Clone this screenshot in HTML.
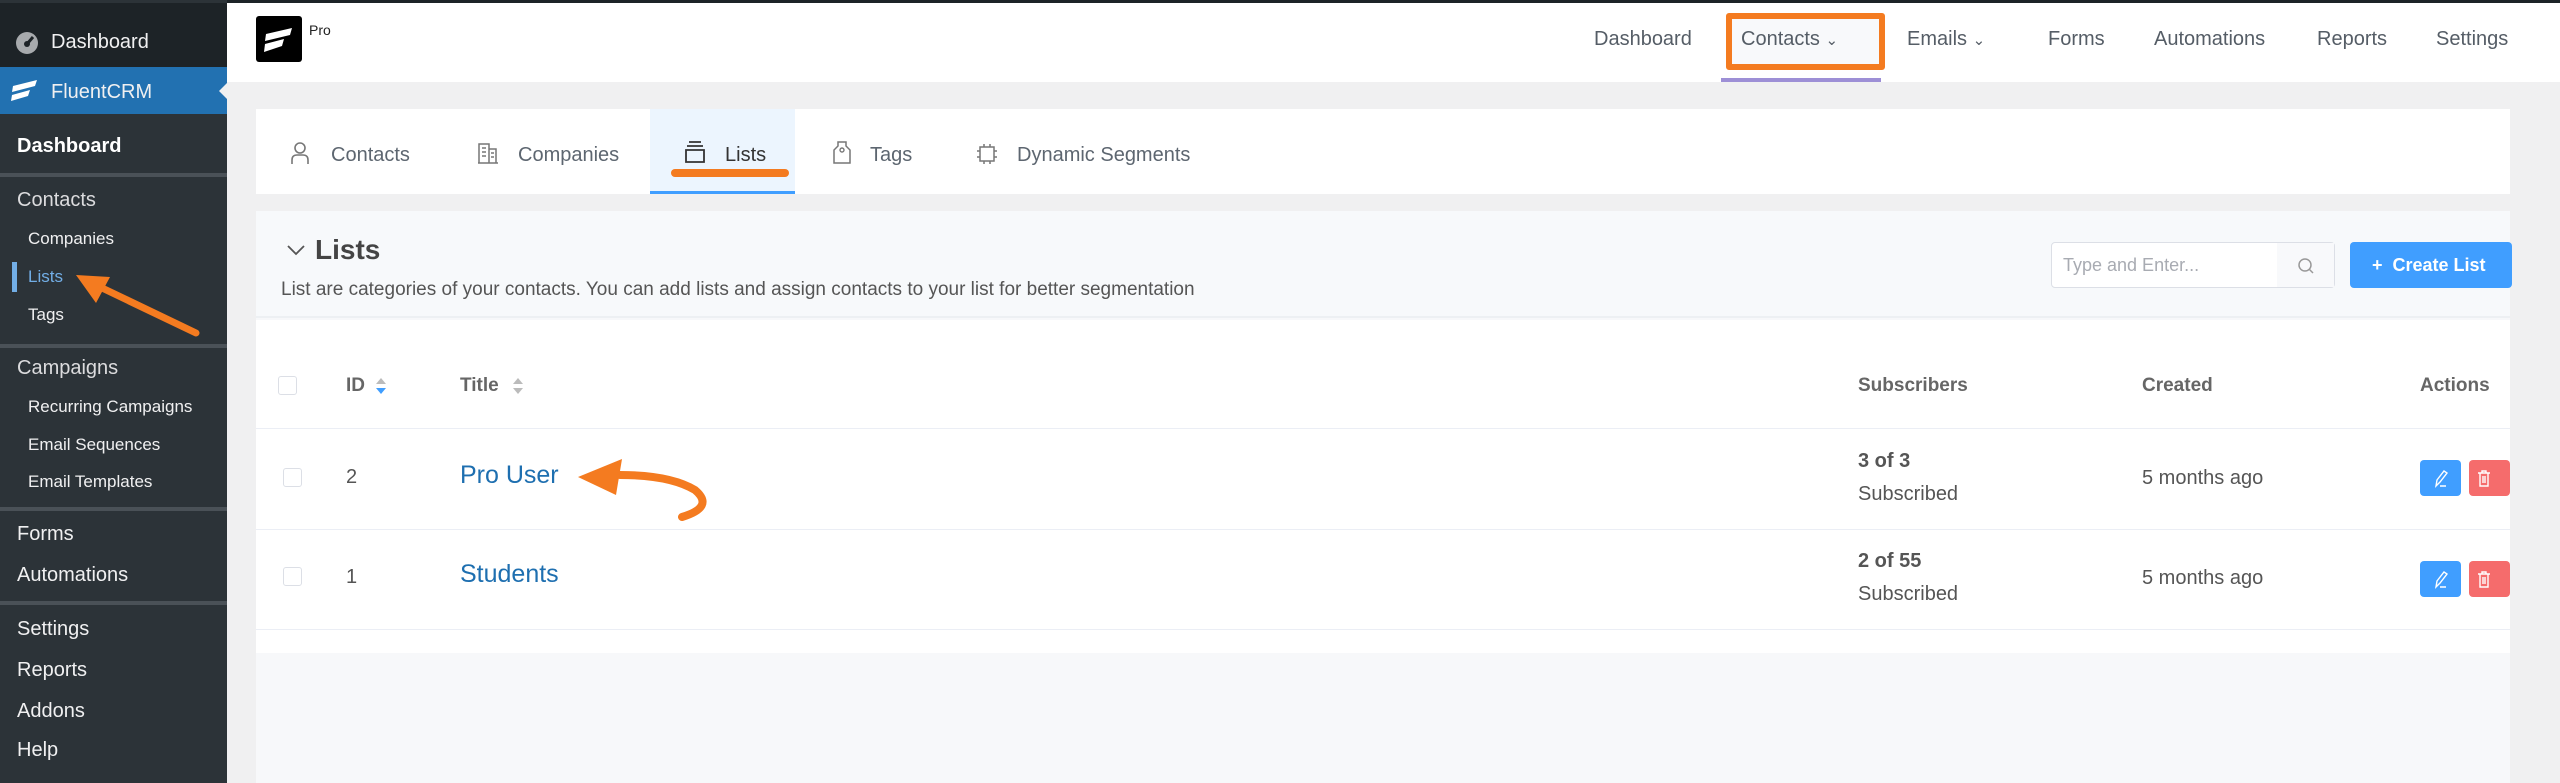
<!DOCTYPE html>
<html><head><meta charset="utf-8"><style>
*{box-sizing:border-box;margin:0;padding:0}
body{width:2560px;height:783px;overflow:hidden;background:#f0f0f1;font-family:"Liberation Sans",sans-serif;position:relative}
.a{position:absolute;white-space:nowrap}
.sb{left:0;top:0;width:227px;height:783px;background:#2c3338}
.sbt{color:#f0f0f1;font-size:20px}
.sbs{color:#f0f0f1;font-size:17px}
.sep{position:absolute;left:0;width:227px;height:4px;background:#4a5157}
.nav{font-size:20px;color:#555d66;top:28px}
.tab{font-size:20px;color:#5d6670;top:144px}
.th{font-size:19px;font-weight:bold;color:#666;top:375px}
.cb{width:19px;height:19px;border:1px solid #dcdfe6;border-radius:3px;background:#fff}
.line{position:absolute;left:256px;width:2254px;height:1px;background:#ebeef5}
.btn{width:41px;height:36px;border-radius:4px}
</style></head><body>
<div class="a" style="left:0;top:0;width:2560px;height:3px;background:#1d2327"></div>
<div class="a sb"></div>
<div class="a" style="left:0;top:3px;width:227px;height:64px;background:#1d2327"></div>
<svg class="a" style="left:14px;top:30px" width="26" height="24" viewBox="0 0 26 24"><circle cx="13" cy="13" r="11" fill="#a7aaad"/><path d="M13 14 L19 7" stroke="#1d2327" stroke-width="3"/><circle cx="13" cy="14" r="3" fill="#1d2327"/></svg>
<div class="a sbt" style="left:51px;top:31px">Dashboard</div>
<div class="a" style="left:0;top:67px;width:227px;height:47px;background:#2271b1"></div>
<svg class="a" style="left:10px;top:80px" width="30" height="22" viewBox="0 0 30 22"><path d="M3 6 L27 0 L25 6 L2 12Z M2 15 L20 10 L18 16 L1 21Z" fill="#fff"/></svg>
<div class="a sbt" style="left:51px;top:81px">FluentCRM</div>
<div class="a" style="left:219px;top:82px;width:0;height:0;border-top:9px solid transparent;border-bottom:9px solid transparent;border-right:9px solid #f0f0f1"></div>
<div class="a sbt" style="left:17px;top:135px;font-weight:bold;color:#fff">Dashboard</div>
<div class="sep" style="top:173px"></div>
<div class="a sbt" style="left:17px;top:189px;color:#dcdcde">Contacts</div>
<div class="a sbs" style="left:28px;top:229px">Companies</div>
<div class="a" style="left:12px;top:262px;width:5px;height:30px;background:#72aee6"></div>
<div class="a sbs" style="left:28px;top:267px;color:#72aee6">Lists</div>
<div class="a sbs" style="left:28px;top:305px">Tags</div>
<div class="sep" style="top:344px"></div>
<div class="a sbt" style="left:17px;top:357px;color:#dcdcde">Campaigns</div>
<div class="a sbs" style="left:28px;top:397px">Recurring Campaigns</div>
<div class="a sbs" style="left:28px;top:435px">Email Sequences</div>
<div class="a sbs" style="left:28px;top:472px">Email Templates</div>
<div class="sep" style="top:507px"></div>
<div class="a sbt" style="left:17px;top:523px">Forms</div>
<div class="a sbt" style="left:17px;top:564px">Automations</div>
<div class="sep" style="top:601px"></div>
<div class="a sbt" style="left:17px;top:618px">Settings</div>
<div class="a sbt" style="left:17px;top:659px">Reports</div>
<div class="a sbt" style="left:17px;top:700px">Addons</div>
<div class="a sbt" style="left:17px;top:739px">Help</div>
<svg class="a" style="left:60px;top:265px" width="150" height="80"><path d="M136 68 L40 22" stroke="#f47b20" stroke-width="7" stroke-linecap="round"/><path d="M16 10 L50 12 L36 38Z" fill="#f47b20"/></svg>

<div class="a" style="left:227px;top:3px;width:2333px;height:79px;background:#fff"></div>
<div class="a" style="left:256px;top:16px;width:46px;height:46px;background:#000;border-radius:3px"></div>
<svg class="a" style="left:262px;top:27px" width="34" height="26" viewBox="0 0 34 26"><path d="M4 7 L30 1 L28 8 L3 14Z M3 17 L22 12 L20 19 L2 25Z" fill="#fff"/></svg>
<div class="a" style="left:309px;top:22px;font-size:14px;color:#222">Pro</div>
<div class="a nav" style="left:1594px">Dashboard</div>
<div class="a" style="left:1726px;top:13px;width:159px;height:57px;border:6px solid #f47b20;border-radius:3px;background:#f8f9fb"></div>
<div class="a nav" style="left:1741px">Contacts&nbsp;<span style="font-size:15px">&#8964;</span></div>
<div class="a" style="left:1721px;top:78px;width:160px;height:4px;background:#9d8fd6"></div>
<div class="a nav" style="left:1907px">Emails&nbsp;<span style="font-size:15px">&#8964;</span></div>
<div class="a nav" style="left:2048px">Forms</div>
<div class="a nav" style="left:2154px">Automations</div>
<div class="a nav" style="left:2317px">Reports</div>
<div class="a nav" style="left:2436px">Settings</div>

<div class="a" style="left:256px;top:109px;width:2254px;height:85px;background:#fff"></div>
<div class="a" style="left:650px;top:109px;width:145px;height:85px;background:#ecf5fe;border-bottom:3px solid #409eff"></div>
<div class="a" style="left:671px;top:169px;width:118px;height:8px;background:#f47b20;border-radius:4px"></div>
<svg class="a" style="left:290px;top:141px" width="20" height="24"><circle cx="10" cy="7" r="5" fill="none" stroke="#777" stroke-width="1.6"/><path d="M2 23 V19 Q2 14 7 14 H13 Q18 14 18 19 V23" fill="none" stroke="#777" stroke-width="1.6"/></svg>
<div class="a tab" style="left:331px">Contacts</div>
<svg class="a" style="left:477px;top:142px" width="22" height="22"><path d="M2 21 V2 H12 V21 M12 7 H19 V21 M1 21 H21 M5 6 H9 M5 10 H9 M5 14 H9 M14 11 H17 M14 15 H17" fill="none" stroke="#777" stroke-width="1.5"/></svg>
<div class="a tab" style="left:518px">Companies</div>
<svg class="a" style="left:683px;top:140px" width="24" height="24"><path d="M6 2 H18 M4 6 H20 M3 10 H21 V22 H3Z" fill="none" stroke="#333" stroke-width="1.8"/></svg>
<div class="a tab" style="left:725px;color:#333">Lists</div>
<svg class="a" style="left:832px;top:140px" width="20" height="25"><path d="M6 2 H14 V6 L18 10 V23 H2 V10 L6 6Z" fill="none" stroke="#777" stroke-width="1.5"/><circle cx="10" cy="10" r="2" fill="none" stroke="#777" stroke-width="1.4"/></svg>
<div class="a tab" style="left:870px">Tags</div>
<svg class="a" style="left:976px;top:143px" width="22" height="22"><rect x="4" y="4" width="14" height="14" fill="none" stroke="#777" stroke-width="1.5"/><path d="M8 1V4M14 1V4M8 18V21M14 18V21M1 8H4M1 14H4M18 8H21M18 14H21" stroke="#777" stroke-width="1.5"/></svg>
<div class="a tab" style="left:1017px">Dynamic Segments</div>

<div class="a" style="left:256px;top:211px;width:2254px;height:572px;background:#f7f8fa"></div>
<div class="a" style="left:256px;top:211px;width:2254px;height:107px;background:#f7f9fb;border-bottom:2px solid #edf0f3"></div>
<div class="a" style="left:256px;top:320px;width:2254px;height:333px;background:#fff"></div>
<svg class="a" style="left:286px;top:243px" width="20" height="14"><path d="M2 3 L10 11 L18 3" fill="none" stroke="#555" stroke-width="1.8"/></svg>
<div class="a" style="left:315px;top:234px;font-size:28px;font-weight:bold;color:#444">Lists</div>
<div class="a" style="left:281px;top:279px;font-size:19px;color:#555">List are categories of your contacts. You can add lists and assign contacts to your list for better segmentation</div>
<div class="a" style="left:2051px;top:242px;width:284px;height:46px;border:1px solid #dcdfe6;border-radius:4px;background:#fff"></div>
<div class="a" style="left:2277px;top:243px;width:57px;height:44px;background:#f8f9fb"></div>
<div class="a" style="left:2063px;top:255px;font-size:18px;color:#a8abb2">Type and Enter...</div>
<svg class="a" style="left:2296px;top:256px" width="20" height="20"><circle cx="9" cy="9" r="6" fill="none" stroke="#999" stroke-width="1.5"/><path d="M13 13 L17 17" stroke="#999" stroke-width="1.5"/></svg>
<div class="a" style="left:2350px;top:242px;width:162px;height:46px;background:#409eff;border-radius:4px;color:#fff;font-size:18px;font-weight:bold;padding:13px 0 0 22px">+&nbsp;&nbsp;Create List</div>

<div class="a cb" style="left:278px;top:376px"></div>
<div class="a th" style="left:346px">ID</div>
<svg class="a" style="left:375px;top:376px" width="12" height="20"><path d="M1 8 L6 2 L11 8Z" fill="#bbb"/><path d="M1 12 L6 18 L11 12Z" fill="#409eff"/></svg>
<div class="a th" style="left:460px">Title</div>
<svg class="a" style="left:512px;top:376px" width="12" height="20"><path d="M1 8 L6 2 L11 8Z" fill="#bbb"/><path d="M1 12 L6 18 L11 12Z" fill="#bbb"/></svg>
<div class="a th" style="left:1858px">Subscribers</div>
<div class="a th" style="left:2142px">Created</div>
<div class="a th" style="left:2420px">Actions</div>
<div class="line" style="top:428px"></div>
<div class="line" style="top:529px"></div>
<div class="line" style="top:629px"></div>

<div class="a cb" style="left:283px;top:468px"></div>
<div class="a" style="left:346px;top:466px;font-size:20px;color:#555">2</div>
<div class="a" style="left:460px;top:461px;font-size:25px;color:#1e6fb0">Pro User</div>
<div class="a" style="left:1858px;top:450px;font-size:20px;font-weight:bold;color:#555">3 of 3</div>
<div class="a" style="left:1858px;top:483px;font-size:20px;color:#555">Subscribed</div>
<div class="a" style="left:2142px;top:467px;font-size:20px;color:#555">5 months ago</div>

<div class="a cb" style="left:283px;top:567px"></div>
<div class="a" style="left:346px;top:566px;font-size:20px;color:#555">1</div>
<div class="a" style="left:460px;top:560px;font-size:25px;color:#1e6fb0">Students</div>
<div class="a" style="left:1858px;top:550px;font-size:20px;font-weight:bold;color:#555">2 of 55</div>
<div class="a" style="left:1858px;top:583px;font-size:20px;color:#555">Subscribed</div>
<div class="a" style="left:2142px;top:567px;font-size:20px;color:#555">5 months ago</div>

<div class="a btn" style="left:2420px;top:460px;background:#409eff"></div>
<div class="a btn" style="left:2469px;top:460px;background:#f56c6c"></div>
<div class="a btn" style="left:2420px;top:561px;background:#409eff"></div>
<div class="a btn" style="left:2469px;top:561px;background:#f56c6c"></div>
<svg class="a" style="left:2420px;top:460px" width="90" height="137"><g fill="none" stroke="#fff" stroke-width="1.4"><path d="M16 26 L17 20 L24 11 L27 13 L20 22Z M20 26 H26"/><path d="M58 13 H70 M62 13 V11 H66 V13 M60 13 V26 H68 V13 M63 16 V23 M65 16 V23"/><g transform="translate(0,101)"><path d="M16 26 L17 20 L24 11 L27 13 L20 22Z M20 26 H26"/><path d="M58 13 H70 M62 13 V11 H66 V13 M60 13 V26 H68 V13 M63 16 V23 M65 16 V23"/></g></g></svg>

<svg class="a" style="left:570px;top:455px" width="160" height="75"><path d="M50 20 Q100 20 125 35 Q145 52 112 62" fill="none" stroke="#f47b20" stroke-width="8" stroke-linecap="round"/><path d="M8 22 L52 4 L46 40Z" fill="#f47b20"/></svg>
</body></html>
